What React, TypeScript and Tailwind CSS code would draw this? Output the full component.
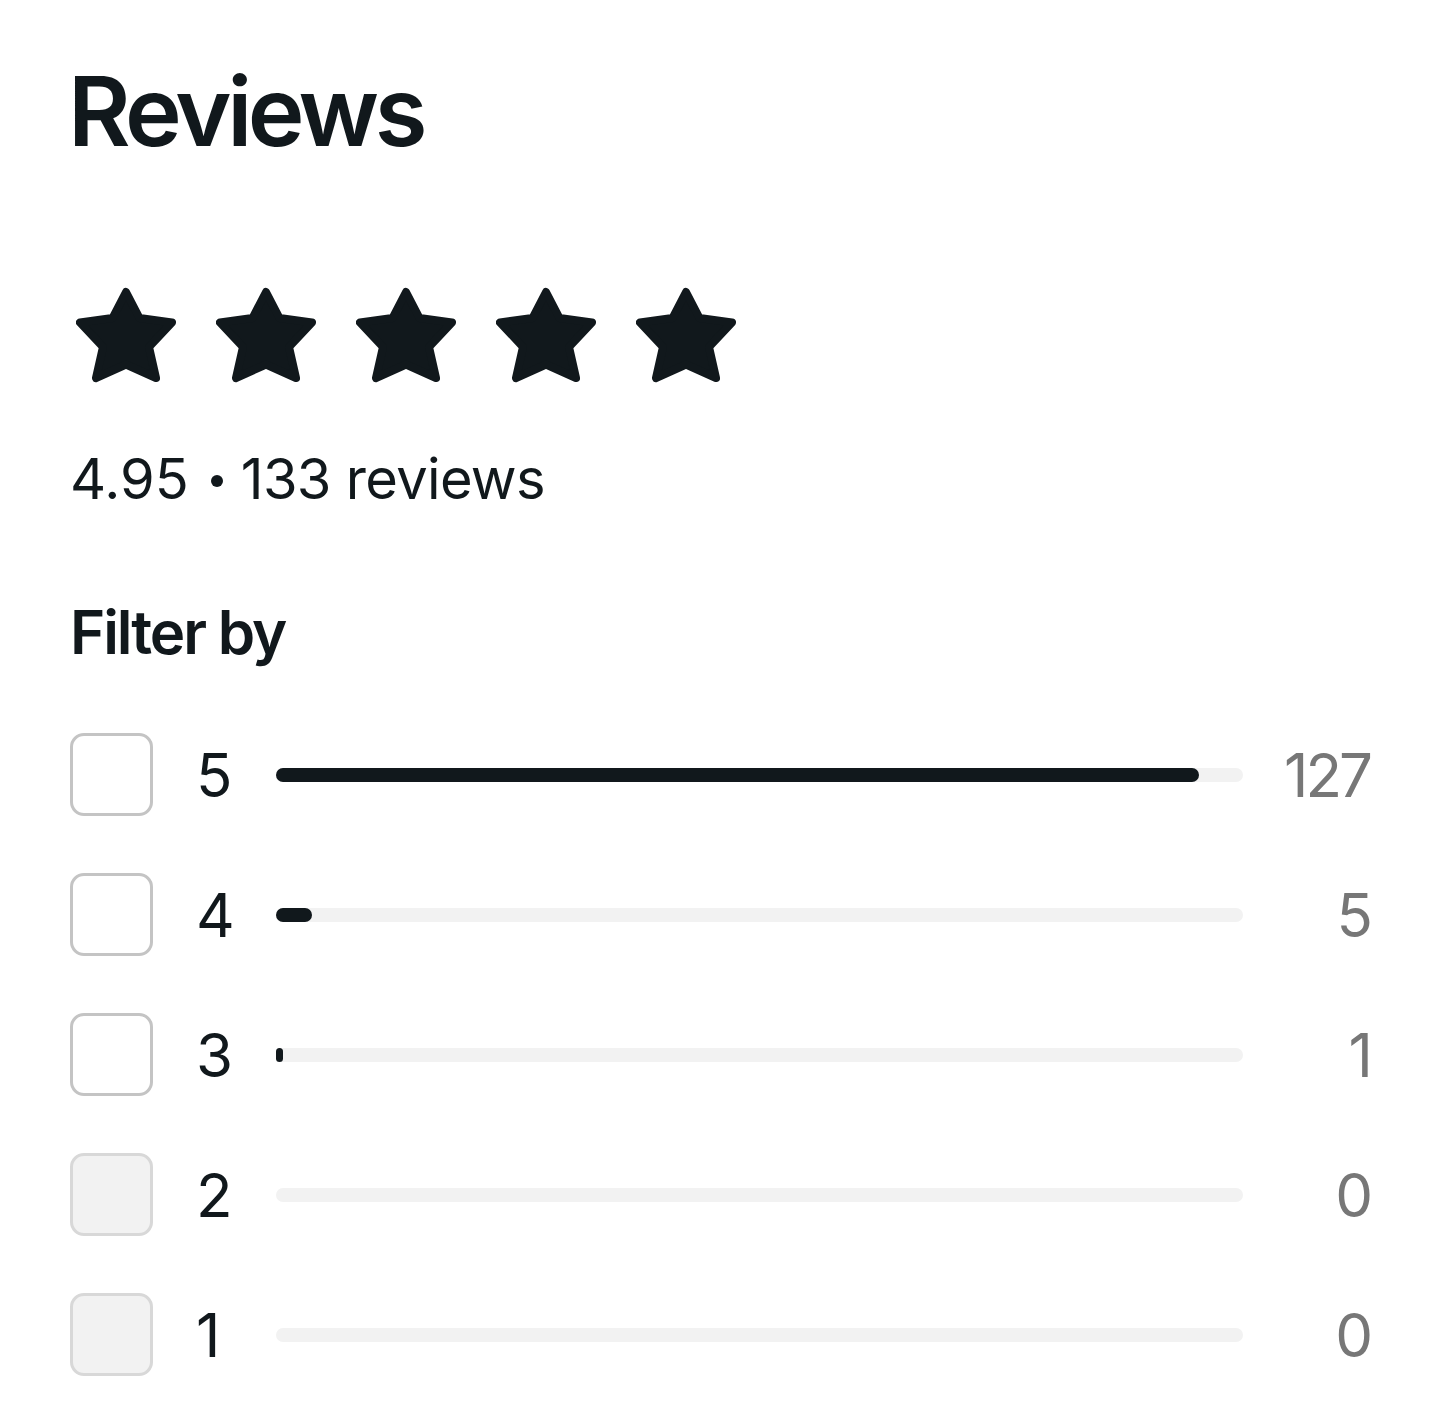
import React from 'react';

const rows = [
  { stars: 5, count: 127, enabled: true },
  { stars: 4, count: 5, enabled: true },
  { stars: 3, count: 1, enabled: true },
  { stars: 2, count: 0, enabled: false },
  { stars: 1, count: 0, enabled: false },
];

const total = 133;

function Star() {
  return (
    <svg width="100" height="96" viewBox="0 0 100 96" className="shrink-0">
      <polygon
        points="50,5 63.5,31 96,35.5 73,60 80,91 50,77.5 20,91 27,60 4,35.5 36.5,31"
        fill="#11181c"
        stroke="#11181c"
        strokeWidth="8"
        strokeLinejoin="round"
      />
    </svg>
  );
}

export default function App() {
  return (
    <div className="min-h-screen bg-white px-[70px] pt-[63px] font-['Inter',sans-serif] text-[#11181c]">
      <h1 className="-ml-[2px] text-[96px] leading-[96px] font-semibold tracking-[-0.047em]">Reviews</h1>

      <div className="mt-[128px] flex gap-[40px] pl-[6px]">
        {[0, 1, 2, 3, 4].map((i) => (
          <Star key={i} />
        ))}
      </div>

      <div className="mt-[68px] text-[56px] leading-[56px]">
        4.95
        <span className="ml-[22px] mr-[18px] inline-block h-[12px] w-[12px] rounded-full bg-[#11181c] align-[12px]" />
        <span className="tracking-[-0.012em]">133 reviews</span>
      </div>

      <div className="mt-[95px] text-[60px] leading-[60px] font-semibold tracking-[-0.035em]">Filter by</div>

      <div className="mt-[71px] flex flex-col gap-[57px]">
        {rows.map((row) => {
          const pct = (row.count / total) * 100;
          return (
            <div key={row.stars} className="flex h-[83px] items-center">
              <div
                className={
                  row.enabled
                    ? 'h-[83px] w-[83px] shrink-0 rounded-[14px] border-[3px] border-[#c4c4c4] bg-white'
                    : 'h-[83px] w-[83px] shrink-0 rounded-[14px] border-[3px] border-[#d8d8d8] bg-[#f2f2f2]'
                }
              />
              <div className="ml-[43px] w-[80px] shrink-0 text-[60px] leading-[60px]">{row.stars}</div>
              <div className="h-[14px] flex-1 rounded-full bg-[#f2f2f2]">
                {row.count > 0 && (
                  <div
                    className="h-[14px] rounded-full bg-[#11181c]"
                    style={{ width: `${pct}%`, minWidth: '5px' }}
                  />
                )}
              </div>
              <div className="w-[127px] shrink-0 text-right text-[60px] leading-[60px] tracking-[-0.05em] text-[#777777]">
                {row.count}
              </div>
            </div>
          );
        })}
      </div>
    </div>
  );
}
